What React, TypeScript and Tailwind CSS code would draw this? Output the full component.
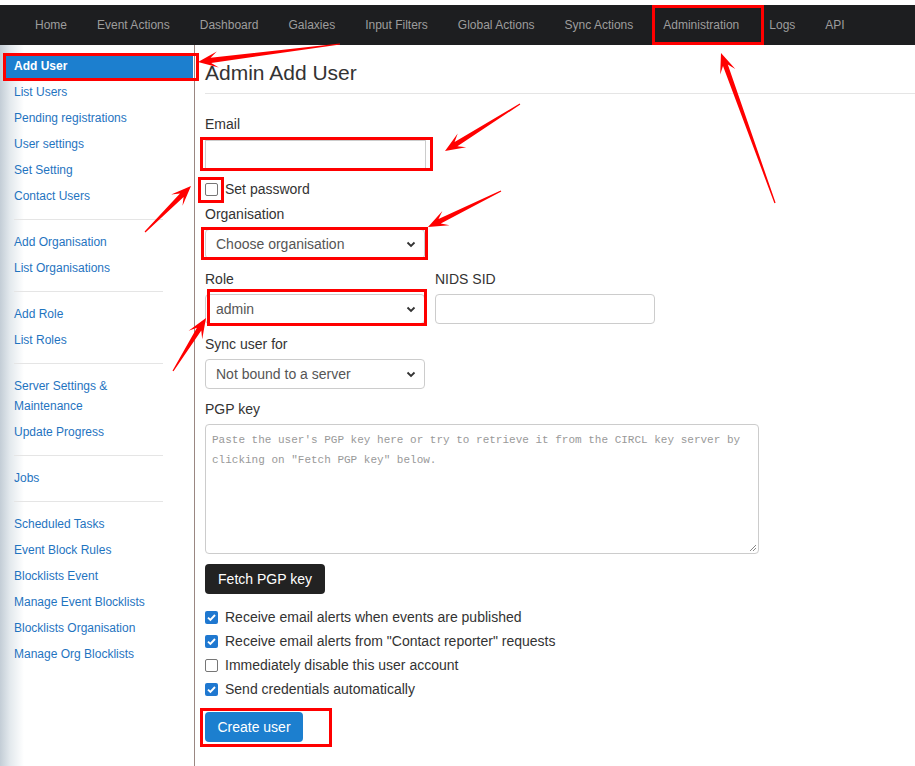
import React from 'react';

const navItems = [
  'Home',
  'Event Actions',
  'Dashboard',
  'Galaxies',
  'Input Filters',
  'Global Actions',
  'Sync Actions',
  'Administration',
  'Logs',
  'API',
];

const sideGroups: string[][] = [
  ['Add User', 'List Users', 'Pending registrations', 'User settings', 'Set Setting', 'Contact Users'],
  ['Add Organisation', 'List Organisations'],
  ['Add Role', 'List Roles'],
  ['Server Settings & Maintenance', 'Update Progress'],
  ['Jobs'],
  [
    'Scheduled Tasks',
    'Event Block Rules',
    'Blocklists Event',
    'Manage Event Blocklists',
    'Blocklists Organisation',
    'Manage Org Blocklists',
  ],
];

const checks = [
  { label: 'Receive email alerts when events are published', on: true },
  { label: 'Receive email alerts from "Contact reporter" requests', on: true },
  { label: 'Immediately disable this user account', on: false },
  { label: 'Send credentials automatically', on: true },
];

// tail -> tip, in page pixels
const arrows: [number, number, number, number][] = [
  [340, 44, 198, 62],
  [520, 104, 445, 151],
  [145, 232, 191, 186],
  [501, 191, 428, 227],
  [173, 371, 206, 318],
  [775, 203, 721, 53],
];

// red outline boxes: left, top, width, height
const boxes = [
  'left-[652px] top-[5px] w-[112px] h-[40px]',
  'left-[3px] top-[53px] w-[196px] h-[28px]',
  'left-[200px] top-[137px] w-[233px] h-[34px]',
  'left-[198px] top-[177px] w-[26px] h-[26px]',
  'left-[201px] top-[227px] w-[227px] h-[33px]',
  'left-[207px] top-[289px] w-[220px] h-[37px]',
  'left-[200px] top-[708px] w-[132px] h-[39px]',
];

function arrowPoints(x1: number, y1: number, x2: number, y2: number) {
  const dx = x2 - x1;
  const dy = y2 - y1;
  const len = Math.hypot(dx, dy);
  const ux = dx / len;
  const uy = dy / len;
  const nx = -uy;
  const ny = ux;
  const at = (back: number, side: number) =>
    `${(x2 - ux * back + nx * side).toFixed(1)},${(y2 - uy * back + ny * side).toFixed(1)}`;
  return [
    at(len, 0.6),
    at(13, 2.6),
    at(20, 8),
    at(0, 0),
    at(20, -8),
    at(13, -2.6),
    at(len, -0.6),
  ].join(' ');
}

function Chevron() {
  return (
    <svg width="10" height="10" viewBox="0 0 10 10" className="shrink-0">
      <path d="M1.5 3.5 L5 7 L8.5 3.5" fill="none" stroke="#333" strokeWidth="1.8" />
    </svg>
  );
}

function Select({ value }: { value: string }) {
  return (
    <div className="flex items-center justify-between w-[220px] h-[30px] border border-[#ccc] rounded-[4px] bg-white pl-[10px] pr-[8px] text-[14px] text-[#555]">
      <span>{value}</span>
      <Chevron />
    </div>
  );
}

function Checkbox({ on }: { on: boolean }) {
  if (on) {
    return (
      <span className="flex items-center justify-center w-[13px] h-[13px] rounded-[2px] bg-[#1f78d0]">
        <svg width="11" height="11" viewBox="0 0 11 11">
          <path d="M2 5.6 L4.4 8 L9 3" fill="none" stroke="#fff" strokeWidth="1.9" />
        </svg>
      </span>
    );
  }
  return <span className="w-[13px] h-[13px] rounded-[2px] border border-[#767676] bg-white" />;
}

function Label({ children }: { children: React.ReactNode }) {
  return <div className="leading-[20px] text-[14px] text-[#333]">{children}</div>;
}

export default function App() {
  return (
    <div className="relative w-[915px] h-[766px] overflow-hidden bg-white font-['Liberation_Sans',Arial,sans-serif]">
      <div className="h-[5px]" />
      <nav className="flex items-center h-[40px] bg-[#1d1e20] pl-[20px] pb-[1px] text-[12px] text-[#9d9d9d]">
        {navItems.map((n) => (
          <span key={n} className="px-[15px] whitespace-nowrap">
            {n}
          </span>
        ))}
      </nav>

      <div className="flex h-[721px]">
        <aside className="w-[195px] shrink-0 border-r border-[#9a8782] pt-[8px] bg-[linear-gradient(to_right,#c3cdd6_0px,#e3e9ed_10px,#ffffff_24px)]">
          {sideGroups.map((g, gi) => (
            <div key={gi}>
              {gi > 0 && <div className="ml-[14px] w-[149px] mt-[10px] mb-[9px] border-t border-[#e5e5e5]" />}
              {g.map((item) => {
                const active = item === 'Add User';
                return (
                  <div
                    key={item}
                    className={
                      active
                        ? 'ml-[4px] mr-[1px] pl-[10px] py-[3px] leading-[20px] text-[12px] font-bold text-white bg-[#1c7fcf]'
                        : 'ml-[4px] pl-[10px] py-[3px] leading-[20px] text-[12px] text-[#1f74bf]'
                    }
                  >
                    <div className="w-[150px]">{item}</div>
                  </div>
                );
              })}
            </div>
          ))}
        </aside>

        <main className="flex-1 pl-[10px] pt-[17px]">
          <h2 className="text-[21px] leading-[22px] text-[#333]">Admin Add User</h2>
          <div className="mt-[9px] border-t border-[#e5e5e5]" />

          <div className="mt-[20px]">
            <Label>Email</Label>
            <div className="mt-[6px] w-[221px] h-[29px] border border-[#ccc] bg-white" />

            <div className="mt-[10px] flex items-center gap-[7px] h-[20px]">
              <Checkbox on={false} />
              <span className="text-[14px] text-[#333]">Set password</span>
            </div>

            <div className="mt-[5px]">
              <Label>Organisation</Label>
            </div>
            <div className="mt-[5px]">
              <Select value="Choose organisation" />
            </div>

            <div className="mt-[10px] flex gap-[10px]">
              <div>
                <Label>Role</Label>
                <div className="mt-[5px]">
                  <Select value="admin" />
                </div>
              </div>
              <div>
                <Label>NIDS SID</Label>
                <div className="mt-[5px] w-[220px] h-[30px] border border-[#ccc] rounded-[4px] bg-white" />
              </div>
            </div>

            <div className="mt-[10px]">
              <Label>Sync user for</Label>
            </div>
            <div className="mt-[5px]">
              <Select value="Not bound to a server" />
            </div>

            <div className="mt-[10px]">
              <Label>PGP key</Label>
            </div>
            <div className="relative mt-[5px] w-[554px] h-[130px] border border-[#ccc] rounded-[4px] bg-white px-[6px] pt-[5px] font-['Liberation_Mono',monospace] text-[11px] leading-[20px] text-[#999]">
              <div>Paste the user's PGP key here or try to retrieve it from the CIRCL key server by</div>
              <div>clicking on "Fetch PGP key" below.</div>
              <svg width="9" height="9" viewBox="0 0 9 9" className="absolute right-[1px] bottom-[1px]">
                <path d="M8 2 L2 8 M8 5 L5 8" stroke="#888" strokeWidth="1" />
              </svg>
            </div>

            <div className="mt-[10px] flex items-center justify-center w-[120px] h-[30px] rounded-[4px] bg-[#222] text-[14px] text-white">
              Fetch PGP key
            </div>

            <div className="mt-[11px]">
              {checks.map((c) => (
                <div key={c.label} className="flex items-center gap-[7px] h-[24px]">
                  <Checkbox on={c.on} />
                  <span className="text-[14px] text-[#333]">{c.label}</span>
                </div>
              ))}
            </div>

            <div className="mt-[11px] flex items-center justify-center w-[98px] h-[30px] rounded-[4px] bg-[#1c7fcf] text-[14px] text-white">
              Create user
            </div>
          </div>
        </main>
      </div>

      {boxes.map((b) => (
        <div key={b} className={`absolute border-[3px] border-[#ff0000] ${b}`} />
      ))}

      <svg className="absolute left-0 top-0 pointer-events-none" width="915" height="766">
        {arrows.map(([x1, y1, x2, y2], i) => (
          <polygon key={i} points={arrowPoints(x1, y1, x2, y2)} fill="#ff0000" />
        ))}
      </svg>
    </div>
  );
}
